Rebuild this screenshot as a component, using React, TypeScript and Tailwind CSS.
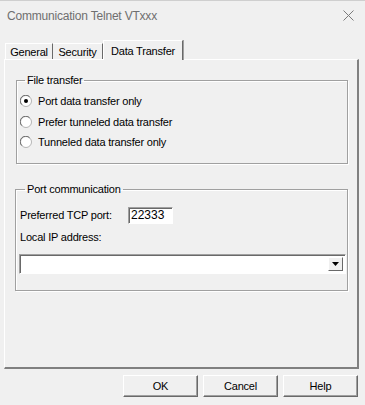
import { useState } from "react";

function Radio({ checked }: { checked: boolean }) {
    return (
        <svg width="12" height="12" viewBox="0 0 12 12" className="shrink-0">
            <circle cx="6" cy="6" r="5.5" fill="#ffffff" stroke="#b4b4b4" />
            <path d="M1.8 9.6 A5 5 0 0 1 9.6 1.8" fill="none" stroke="#696969" strokeWidth="1" />
            {checked && <circle cx="6" cy="6" r="2" fill="#000000" />}
        </svg>
    );
}

const options = ["Port data transfer only", "Prefer tunneled data transfer", "Tunneled data transfer only"];

export default function App() {
    const [mode, setMode] = useState(0);
    const [port, setPort] = useState("22333");

    return (
        <div className="w-[365px] h-[405px] bg-[#f0f0f0] font-['Liberation_Sans',Arial,sans-serif] text-[11px] tracking-[-0.2px] text-black overflow-hidden border-t border-[#cfcfcf]">
            {/* title bar */}
            <div className="h-[29px] flex items-center justify-between pl-[7px] pr-[11px]">
                <span className="text-[12px] text-[#6f6f6f]">Communication Telnet VTxxx</span>
                <svg width="11" height="11" viewBox="0 0 11 11">
                    <path d="M0.5 0.5 L10.5 10.5 M10.5 0.5 L0.5 10.5" stroke="#7a7a7a" strokeWidth="1" />
                </svg>
            </div>

            {/* tabs */}
            <div className="mt-[10px] pl-[5px] flex items-end h-[19px] relative z-10">
                <div className="h-[16px] w-[48px] justify-center flex items-center pt-[1px] border-t border-l border-white border-r border-r-[#696969]">General</div>
                <div className="h-[16px] w-[50px] justify-center flex items-center pt-[1px] border-t border-white border-r border-r-[#696969]">Security</div>
                <div className="h-[20px] w-[80px] -mb-px justify-center flex items-start pt-[2px] bg-[#f0f0f0] border-t border-l border-white border-r border-r-[#696969] shadow-[1px_0_0_#a0a0a0]">Data Transfer</div>
            </div>

            {/* tab panel */}
            <div className="ml-[4px] w-[355px] h-[310px] border-t border-l border-white border-r-2 border-b-2 border-r-[#808080] border-b-[#808080] pl-[11px] pr-[9px]">
                <fieldset className="mt-[14px] border border-[#a0a0a0] shadow-[inset_1px_1px_0_#ffffff,1px_1px_0_#ffffff] pl-[3px] pb-[10px]">
                    <legend className="ml-[5px] px-[2px] leading-[13px]">File transfer</legend>
                    <div className="pt-[4px]">
                        {options.map((o, i) => (
                            <label key={o} className="h-[20.5px] flex items-center gap-[6px]" onClick={() => setMode(i)}>
                                <Radio checked={mode === i} />
                                <span>{o}</span>
                            </label>
                        ))}
                    </div>
                </fieldset>

                <fieldset className="mt-[19px] border border-[#a0a0a0] shadow-[inset_1px_1px_0_#ffffff,1px_1px_0_#ffffff] pl-[3px] pr-[1px] pb-[16px] -ml-[1px]">
                    <legend className="ml-[6px] px-[2px] leading-[13px]">Port communication</legend>
                    <div className="pt-[11px] flex items-center">
                        <span className="ml-[1px] w-[108px]">Preferred TCP port:</span>
                        <input
                            value={port}
                            onChange={(e) => setPort(e.target.value)}
                            className="w-[45px] h-[17px] px-[2px] bg-white border border-t-[#a0a0a0] border-l-[#a0a0a0] border-r-white border-b-white shadow-[inset_1px_1px_0_#696969] outline-none text-[12px] tracking-normal leading-[15px]"
                        />
                    </div>
                    <div className="mt-[7px] ml-[1px] h-[13px] leading-[13px]">Local IP address:</div>
                    <div className="mt-[10px] h-[20px] bg-white border border-t-[#a0a0a0] border-l-[#a0a0a0] border-r-white border-b-white shadow-[inset_1px_1px_0_#696969] flex justify-end items-stretch p-[2px]">
                        <div className="w-[15px] bg-[#f0f0f0] border border-t-white border-l-white border-r-[#696969] border-b-[#696969] flex items-center justify-center">
                            <svg width="7" height="4" viewBox="0 0 7 4">
                                <path d="M0 0 H7 L3.5 4 Z" fill="#000" />
                            </svg>
                        </div>
                    </div>
                </fieldset>
            </div>

            {/* buttons */}
            <div className="mt-[6px] pr-[7px] flex justify-end gap-[5px]">
                {["OK", "Cancel", "Help"].map((b) => (
                    <button
                        key={b}
                        className="w-[75px] h-[22px] bg-[#f0f0f0] border border-t-white border-l-white border-r-[#696969] border-b-[#696969] shadow-[inset_-1px_-1px_0_#a0a0a0] text-[11px]"
                    >
                        {b}
                    </button>
                ))}
            </div>
        </div>
    );
}
